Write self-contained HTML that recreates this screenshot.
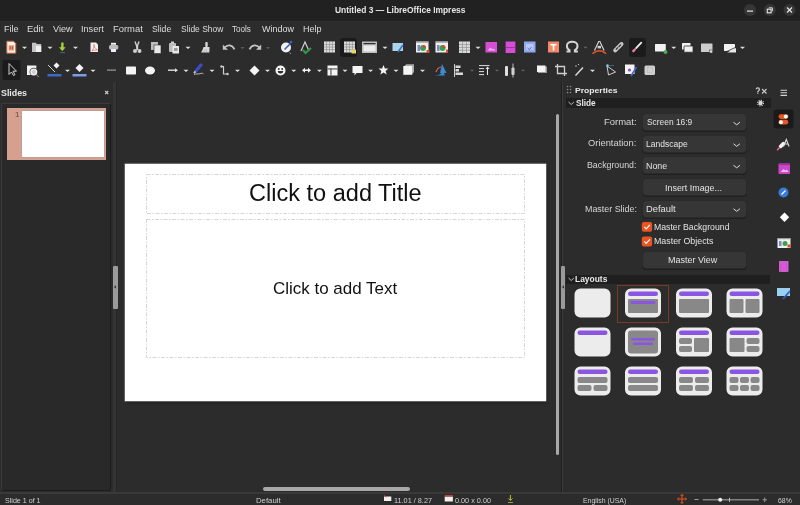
<!DOCTYPE html>
<html><head><meta charset="utf-8"><style>
*{margin:0;padding:0;box-sizing:border-box}
html,body{width:800px;height:505px;overflow:hidden;background:#2c2c2c;font-family:"Liberation Sans", sans-serif;color:#e4e4e4}
.a{position:absolute;white-space:nowrap;line-height:normal}
.dd{position:absolute;left:641.5px;width:105.5px;height:18px;border-radius:4px;background:#363636;border:1px solid #2a2a2a;box-shadow:0 1px 0 #202020}
</style></head><body>
<!-- title bar -->
<div class="a" style="left:0;top:0;width:800px;height:21px;background:#212121"></div><div class="a" style="left:0;top:21px;width:800px;height:1px;background:#303030"></div>

<!-- slides pane -->
<div class="a" style="left:1px;top:103px;width:110px;height:388px;background:#292929;border:1px solid #3a3a3a;border-right-color:#1c1c1c;border-bottom-color:#1c1c1c;border-radius:0 0 3px 3px"></div>
<div class="a" style="left:6.5px;top:107.5px;width:99.5px;height:52.5px;background:#d6a090"></div>
<div class="a" style="left:21.5px;top:111px;width:82px;height:46px;background:#ffffff;box-shadow:0 0 0 .6px #b0a098"></div>
<div class="a" style="left:14.6px;top:110px;font-size:7.5px;color:#5e4a44;transform:scaleX(1.05)">1</div>

<!-- edit area -->
<div class="a" style="left:111px;top:82px;width:451px;height:410px;background:#2c2c2c"></div>
<div class="a" style="left:112.5px;top:82px;width:3px;height:410px;background:#353535"></div>
<div class="a" style="left:115.5px;top:82px;width:1px;height:410px;background:#262626"></div>
<div class="a" style="left:113px;top:266px;width:4.5px;height:43px;background:#9a9a9a;border-radius:1px"></div>
<!-- slide -->
<div class="a" style="left:125.5px;top:164.5px;width:421px;height:238px;background:#1c1c1c;filter:blur(1.2px)"></div>
<div class="a" style="left:124.5px;top:163.5px;width:421px;height:237.5px;background:#ffffff;box-shadow:0 0 1px .4px rgba(230,230,230,.7)"></div>
<svg class="a" style="left:0;top:0" width="800" height="505"><g fill="none" stroke="#d6d6d6" stroke-width="1" stroke-dasharray="4 1.5 1.5 1.5">
<rect x="146.5" y="174.5" width="378" height="39"/><rect x="146.5" y="219.5" width="378" height="138"/></g></svg>
<!-- scrollbars -->
<div class="a" style="left:555.75px;top:113.7px;width:3.6px;height:341.2px;background:#a8a8a8;border-radius:2px"></div>
<div class="a" style="left:262.8px;top:487.2px;width:147.5px;height:3.8px;background:#a8a8a8;border-radius:2px"></div>

<!-- right panel -->
<div class="a" style="left:560.5px;top:82px;width:1px;height:410px;background:#1e1e1e"></div>
<div class="a" style="left:561.5px;top:82px;width:1px;height:410px;background:#3c3c3c"></div>
<div class="a" style="left:560.5px;top:265.5px;width:4.5px;height:43px;background:#9a9a9a;border-radius:1px"></div>
<div class="a" style="left:566px;top:97.5px;width:204.5px;height:10.5px;background:#1f1f1f"></div>
<div class="a" style="left:566px;top:274.5px;width:203.5px;height:9.5px;background:#1f1f1f"></div>
<div class="dd" style="top:113px"></div>
<div class="dd" style="top:134.5px"></div>
<div class="dd" style="top:156px"></div>
<div class="dd" style="top:178px"></div>
<div class="dd" style="top:200px"></div>
<div class="dd" style="top:250.5px"></div>

<!-- status bar -->
<div class="a" style="left:0;top:492px;width:800px;height:1.8px;background:#393939"></div>

<div class="a" style="left:334.89px;top:4.77px;font-size:8.84px;font-weight:700;color:#e6e6e6;transform:scaleX(0.953);transform-origin:0 0;">Untitled 3 — LibreOffice Impress</div>
<div class="a" style="left:4.27px;top:23.50px;font-size:8.70px;font-weight:400;color:#dedede;transform:scaleX(1.045);transform-origin:0 0;">File</div>
<div class="a" style="left:27.24px;top:23.50px;font-size:8.70px;font-weight:400;color:#dedede;transform:scaleX(1.090);transform-origin:0 0;">Edit</div>
<div class="a" style="left:52.95px;top:23.50px;font-size:8.70px;font-weight:400;color:#dedede;transform:scaleX(1.045);transform-origin:0 0;">View</div>
<div class="a" style="left:81.18px;top:23.50px;font-size:8.70px;font-weight:400;color:#dedede;transform:scaleX(1.052);transform-origin:0 0;">Insert</div>
<div class="a" style="left:112.75px;top:23.50px;font-size:8.70px;font-weight:400;color:#dedede;transform:scaleX(1.083);transform-origin:0 0;">Format</div>
<div class="a" style="left:151.61px;top:23.50px;font-size:8.70px;font-weight:400;color:#dedede;transform:scaleX(0.996);transform-origin:0 0;">Slide</div>
<div class="a" style="left:180.62px;top:23.50px;font-size:8.70px;font-weight:400;color:#dedede;transform:scaleX(0.974);transform-origin:0 0;">Slide Show</div>
<div class="a" style="left:232.34px;top:23.50px;font-size:8.70px;font-weight:400;color:#dedede;transform:scaleX(0.933);transform-origin:0 0;">Tools</div>
<div class="a" style="left:261.95px;top:23.50px;font-size:8.70px;font-weight:400;color:#dedede;transform:scaleX(1.035);transform-origin:0 0;">Window</div>
<div class="a" style="left:302.78px;top:23.50px;font-size:8.70px;font-weight:400;color:#dedede;transform:scaleX(1.040);transform-origin:0 0;">Help</div>
<div class="a" style="left:1.33px;top:87.90px;font-size:9.13px;font-weight:700;color:#e8e8e8;transform:scaleX(0.968);transform-origin:0 0;">Slides</div>
<div class="a" style="left:248.82px;top:179.63px;font-size:23.33px;font-weight:400;color:#111111;transform:scaleX(1.009);transform-origin:0 0;">Click to add Title</div>
<div class="a" style="left:272.90px;top:278.63px;font-size:16.38px;font-weight:400;color:#111111;transform:scaleX(1.037);transform-origin:0 0;">Click to add Text</div>
<div class="a" style="left:575.34px;top:85.57px;font-size:7.97px;font-weight:700;color:#e8e8e8;transform:scaleX(1.078);transform-origin:0 0;">Properties</div>
<div class="a" style="left:575.65px;top:97.87px;font-size:9.28px;font-weight:700;color:#e8e8e8;transform:scaleX(0.886);transform-origin:0 0;">Slide</div>
<div class="a" style="left:575.35px;top:273.90px;font-size:8.70px;font-weight:700;color:#e8e8e8;transform:scaleX(0.971);transform-origin:0 0;">Layouts</div>
<div class="a" style="left:604.24px;top:116.97px;font-size:8.84px;font-weight:400;color:#d6d6d6;transform:scaleX(1.072);transform-origin:0 0;">Format:</div>
<div class="a" style="left:588.48px;top:139.12px;font-size:8.19px;font-weight:400;color:#d6d6d6;transform:scaleX(1.144);transform-origin:0 0;">Orientation:</div>
<div class="a" style="left:587.40px;top:160.07px;font-size:8.84px;font-weight:400;color:#d6d6d6;transform:scaleX(0.996);transform-origin:0 0;">Background:</div>
<div class="a" style="left:584.99px;top:203.63px;font-size:8.99px;font-weight:400;color:#d6d6d6;transform:scaleX(0.990);transform-origin:0 0;">Master Slide:</div>
<div class="a" style="left:646.52px;top:117.37px;font-size:8.62px;font-weight:400;color:#e4e4e4;transform:scaleX(0.974);transform-origin:0 0;">Screen 16:9</div>
<div class="a" style="left:646.22px;top:139.17px;font-size:8.41px;font-weight:400;color:#e4e4e4;transform:scaleX(1.016);transform-origin:0 0;">Landscape</div>
<div class="a" style="left:646.29px;top:160.57px;font-size:8.41px;font-weight:400;color:#e4e4e4;transform:scaleX(1.056);transform-origin:0 0;">None</div>
<div class="a" style="left:665.20px;top:181.63px;font-size:9.42px;font-weight:400;color:#e4e4e4;transform:scaleX(0.947);transform-origin:0 0;">Insert Image...</div>
<div class="a" style="left:646.15px;top:203.20px;font-size:9.57px;font-weight:400;color:#e4e4e4;transform:scaleX(0.979);transform-origin:0 0;">Default</div>
<div class="a" style="left:653.80px;top:221.78px;font-size:8.77px;font-weight:400;color:#e4e4e4;transform:scaleX(0.993);transform-origin:0 0;">Master Background</div>
<div class="a" style="left:653.79px;top:236.00px;font-size:8.70px;font-weight:400;color:#e4e4e4;transform:scaleX(1.018);transform-origin:0 0;">Master Objects</div>
<div class="a" style="left:668.48px;top:253.80px;font-size:9.57px;font-weight:400;color:#e4e4e4;transform:scaleX(0.940);transform-origin:0 0;">Master View</div>
<div class="a" style="left:5.28px;top:495.97px;font-size:7.54px;font-weight:400;color:#d0d0d0;transform:scaleX(0.943);transform-origin:0 0;">Slide 1 of 1</div>
<div class="a" style="left:256.38px;top:495.97px;font-size:7.54px;font-weight:400;color:#d0d0d0;transform:scaleX(1.034);transform-origin:0 0;">Default</div>
<div class="a" style="left:394.35px;top:495.97px;font-size:7.54px;font-weight:400;color:#d0d0d0;transform:scaleX(0.969);transform-origin:0 0;">11.01 / 8.27</div>
<div class="a" style="left:455.31px;top:495.97px;font-size:7.54px;font-weight:400;color:#d0d0d0;transform:scaleX(0.965);transform-origin:0 0;">0.00 x 0.00</div>
<div class="a" style="left:582.85px;top:495.97px;font-size:7.54px;font-weight:400;color:#d0d0d0;transform:scaleX(0.913);transform-origin:0 0;">English (USA)</div>
<div class="a" style="left:778.36px;top:495.97px;font-size:7.54px;font-weight:400;color:#d0d0d0;transform:scaleX(0.915);transform-origin:0 0;">68%</div>

<svg class="a" style="left:0;top:0" width="800" height="505">
<!-- window buttons -->
<circle cx="750" cy="10" r="6" fill="#363636"/><circle cx="769.8" cy="10" r="6" fill="#363636"/><circle cx="789.5" cy="10" r="6" fill="#363636"/>
<rect x="747" y="10.5" width="6" height="1.2" fill="#e8e8e8"/>
<rect x="767.3" y="9.2" width="3.8" height="3.6" fill="none" stroke="#e8e8e8" stroke-width="1.1"/><path d="M768.8 7.8h3.6v3.4" fill="none" stroke="#e8e8e8" stroke-width=".9"/>
<path d="M787 7.5l5 5M792 7.5l-5 5" stroke="#e8e8e8" stroke-width="1.2"/>
<rect x="340" y="38" width="17" height="19" rx="3" fill="#1b1b1b"/>
<rect x="629" y="38" width="17" height="19" rx="3" fill="#1b1b1b"/>
<rect x="2.5" y="60" width="18" height="20" rx="2" fill="#1b1b1b"/>
<path d="M6.8 41.2h6.7l2.3 2.3v9.7h-9z" fill="#fdf0e8" stroke="#b8643c" stroke-width="1"/>
<rect x="8.6" y="45.2" width="5.4" height="5.4" fill="#e0a080"/>
<rect x="9.6" y="46.4" width="1.2" height="3" fill="#c05a30"/><rect x="11.8" y="46.4" width="1.2" height="3" fill="#c05a30"/>
<path d="M22.0 46.8h5.0l-2.5 2.25z" fill="#e0e0e0"/>
<path d="M32 42.7h3.8l1 1.3h4.4v8h-9.2z" fill="#c4c4c4"/>
<rect x="35.9" y="45.9" width="5.3" height="6.1" fill="#f0f0f0"/>
<path d="M47.5 46.8h5.0l-2.5 2.25z" fill="#e0e0e0"/>
<path d="M61.3 42.5h2.3v4.8h2l-3.3 4l-3.3-4h2z" fill="#a4cc3c"/>
<rect x="60" y="52.3" width="5" height=".8" fill="#5a6a9a"/>
<path d="M73.0 46.8h5.0l-2.5 2.25z" fill="#e0e0e0"/>
<path d="M90.5 42.5h5.5l2 2v7.5h-7.5z" fill="#f6f0f0"/>
<path d="M92 51c1.5-2.5 2.5-5 2-6.5c-.5 1.5 1 4 3.5 5.5c-1.8-.2-3.6.2-5.5 1z" fill="none" stroke="#e06060" stroke-width=".7"/>
<rect x="111" y="42.8" width="5" height="2" fill="#f0f0f0"/>
<rect x="109" y="45" width="9.3" height="4.5" rx="1.5" fill="#bcbcbc"/>
<rect x="111" y="49" width="5" height="3" fill="#eeeef6"/>
<path d="M135 41.5l2 5.5l2-5.5" fill="none" stroke="#cfcfcf" stroke-width="1.4"/>
<circle cx="135" cy="51" r="2" fill="#cfcfcf"/><circle cx="139.5" cy="51" r="2" fill="#cfcfcf"/>
<rect x="136.2" y="46" width="2" height="4" fill="#cfcfcf"/>
<rect x="151" y="42" width="7" height="8" fill="#bdbdbd"/>
<rect x="154" y="45" width="7" height="8.5" fill="#e8e8e8" stroke="#2c2c2c" stroke-width=".6"/>
<rect x="169" y="43" width="7" height="9" rx="1" fill="#bdbdbd"/>
<rect x="171" y="41.5" width="3" height="2" fill="#d0d0d0"/>
<rect x="172.5" y="46" width="6.5" height="7.5" fill="#e8e8e8"/>
<rect x="174" y="48" width="3.5" height="3" fill="#9a9a9a"/>
<path d="M185.5 46.8h5.0l-2.5 2.25z" fill="#e0e0e0"/>
<rect x="205.3" y="42" width="2.4" height="5" rx=".8" fill="#d8d8d8"/>
<path d="M203.5 47h6v1.8l-.2 3.6h-8.2l1.2-2.2z" fill="#d8d8d8"/>
<path d="M204 52.4l1-3M206.3 52.4l.6-3" stroke="#9a9a9a" stroke-width=".5"/>
<path d="M224.5 47.5c3-3.2 7.5-3.2 10 1.8" fill="none" stroke="#c4c4c4" stroke-width="1.8"/>
<path d="M222.8 44.5v5.2h5.2z" fill="#c4c4c4"/>
<path d="M240.5 47.3h4l-2 1.8z" fill="#6a6a6a"/>
<path d="M259.5 47.5c-3-3.2-7.5-3.2-10 1.8" fill="none" stroke="#c4c4c4" stroke-width="1.8"/>
<path d="M261.2 44.5v5.2h-5.2z" fill="#c4c4c4"/>
<path d="M266 47.3h4l-2 1.8z" fill="#6a6a6a"/>
<circle cx="286" cy="47.5" r="5" fill="#f2f2f2"/>
<path d="M284.5 49.5l6-6" stroke="#3a63c8" stroke-width="1.6"/>
<circle cx="291" cy="42" r="1.3" fill="#3a63c8"/>
<path d="M289.5 52.5l1.5 1.5" stroke="#9a9a9a" stroke-width="1"/>
<path d="M301 51l4-9l4 9" fill="none" stroke="#cfcfcf" stroke-width="1.2"/>
<path d="M303 50l2.5 3l5.5-5" fill="none" stroke="#2f9a48" stroke-width="2"/>
<rect x="324" y="41.5" width="11" height="11" fill="#dedede"/><rect x="326.45" y="41.5" width=".6" height="11" fill="#858585"/><rect x="329.20" y="41.5" width=".6" height="11" fill="#858585"/><rect x="331.95" y="41.5" width=".6" height="11" fill="#858585"/><rect x="324" y="43.95" width="11" height=".6" fill="#858585"/><rect x="324" y="46.70" width="11" height=".6" fill="#858585"/><rect x="324" y="49.45" width="11" height=".6" fill="#858585"/>
<rect x="344" y="41.5" width="11" height="11" fill="#dcdcdc"/><rect x="346.45" y="41.5" width=".6" height="11" fill="#858585"/><rect x="349.20" y="41.5" width=".6" height="11" fill="#858585"/><rect x="351.95" y="41.5" width=".6" height="11" fill="#858585"/><rect x="344" y="43.95" width="11" height=".6" fill="#858585"/><rect x="344" y="46.70" width="11" height=".6" fill="#858585"/><rect x="344" y="49.45" width="11" height=".6" fill="#858585"/>
<rect x="351.5" y="49.5" width="4.5" height="4" fill="#e8d86a"/>
<rect x="362" y="41.5" width="15" height="11.5" fill="#bdbdbd"/>
<rect x="363.5" y="43" width="12" height="1.2" fill="#2c2c2c"/>
<rect x="363.5" y="45.5" width="12" height="6" fill="#ececec"/>
<path d="M382.5 46.8h5.0l-2.5 2.25z" fill="#e0e0e0"/>
<path d="M392.5 43h10.5v8h-10.5z" fill="#a8d4ee"/>
<path d="M398 52l5-7" stroke="#3d6fc0" stroke-width="1.6"/>
<rect x="416" y="41.5" width="12.5" height="11" fill="#f0f0f0"/>
<rect x="416" y="41.5" width="12.5" height="1.2" fill="#9a9a9a"/>
<rect x="417.5" y="45" width="2.5" height="6" fill="#7a88c8"/>
<circle cx="423" cy="48" r="3" fill="#3aa050"/>
<path d="M423 45a3 3 0 0 1 3 3h-3z" fill="#e04030"/>
<rect x="435.5" y="41.5" width="12.5" height="11" fill="#f0f0f0"/>
<rect x="435.5" y="41.5" width="12.5" height="1.2" fill="#9a9a9a"/>
<rect x="437.0" y="45" width="2.5" height="6" fill="#7a88c8"/>
<circle cx="442.5" cy="48" r="3" fill="#3aa050"/>
<path d="M442.5 45a3 3 0 0 1 3 3h-3z" fill="#e04030"/>
<rect x="426.5" y="50" width="3" height="3" fill="#e05020"/>
<rect x="446" y="49.5" width="2" height="3.5" fill="#e05020"/>
<rect x="459" y="41.5" width="11" height="11.5" fill="#d9d9d9"/><rect x="462.37" y="41.5" width=".6" height="11.5" fill="#858585"/><rect x="466.03" y="41.5" width=".6" height="11.5" fill="#858585"/><rect x="459" y="44.08" width="11" height=".6" fill="#858585"/><rect x="459" y="46.95" width="11" height=".6" fill="#858585"/><rect x="459" y="49.83" width="11" height=".6" fill="#858585"/>
<path d="M475.5 46.8h5.0l-2.5 2.25z" fill="#e0e0e0"/>
<rect x="485.5" y="42" width="11.5" height="10.5" fill="#d44fd4"/>
<path d="M487.5 50.5l3-3l2 2l1-1l2 2z" fill="#f0b0f0"/>
<rect x="506" y="41.5" width="9" height="11.5" fill="#d44fd4"/>
<rect x="505" y="41.5" width="1" height="11.5" fill="#7a2a7a"/><rect x="515" y="41.5" width="1" height="11.5" fill="#7a2a7a"/>
<rect x="506" y="47" width="9" height=".7" fill="#8a2a8a"/>
<rect x="524" y="41.5" width="11.5" height="11" fill="#8fa8f0"/>
<rect x="526" y="44" width="7.5" height="6" fill="#b8c8f8"/>
<path d="M527.5 48l2 1.5l2-2.5" stroke="#4a6ad0" stroke-width="1" fill="none"/>
<rect x="548" y="41.5" width="11" height="11" fill="#f08a6a"/>
<path d="M550.5 44h6v1.5h-2.2v5h-1.6v-5h-2.2z" fill="#fff"/>
<path d="M566.5 51.6h3v-1.4c-1.6-.9-2.6-2.4-2.6-4.2c0-2.6 2.3-4.3 5.3-4.3s5.3 1.7 5.3 4.3c0 1.8-1 3.3-2.6 4.2v1.4h3" fill="none" stroke="#d4d4d4" stroke-width="2"/>
<path d="M583.5 46.8h4l-2 1.8z" fill="#6a6a6a"/>
<path d="M594.5 50.5l4.2-9h1.2l4.2 9" fill="none" stroke="#d0d0d0" stroke-width="1.2"/>
<rect x="597.6" y="45.8" width="3.4" height="2.6" fill="#d0d0d0"/>
<path d="M592.5 53.8c4-4 10-4 13.5 0" fill="none" stroke="#d9532a" stroke-width="1.6"/>
<path d="M615.2 50.3l6.3-6.3" stroke="#c8c8c8" stroke-width="4" stroke-linecap="round"/>
<path d="M616.2 49.3l1.6-1.6M619 46.5l1.6-1.6" stroke="#2c2c2c" stroke-width="1.2" stroke-linecap="round"/>
<path d="M641.3 42.6l-5.2 5.6" stroke="#ececec" stroke-width="1.8" stroke-linecap="round"/>
<path d="M634.8 49.5l-1.5 1.6" stroke="#e87aa0" stroke-width="2.4" stroke-linecap="round"/>
<rect x="655" y="44" width="10.8" height="7.5" rx=".5" fill="#f2f2f2"/>
<circle cx="665.5" cy="52" r="2" fill="#45b050"/>
<path d="M671.25 46.8h5.0l-2.5 2.25z" fill="#e0e0e0"/>
<rect x="682" y="43" width="8.5" height="6.5" rx=".5" fill="#f2f2f2"/>
<rect x="684" y="46" width="9" height="6.2" rx=".5" fill="#f2f2f2" stroke="#2c2c2c" stroke-width=".8"/>
<rect x="701" y="43.5" width="11.5" height="8.5" rx=".5" fill="#cdcdcd"/>
<rect x="709.5" y="50" width="3" height="3" fill="#e0e0e0" stroke="#2c2c2c" stroke-width=".5"/>
<rect x="724" y="44" width="11" height="7" rx=".5" fill="#f2f2f2"/>
<path d="M727 52.5l9-4.5v4.5z" fill="#e8e8e8"/><path d="M726 51.8l10-4.6" stroke="#2c2c2c" stroke-width=".8"/>
<path d="M740.0 46.8h5.0l-2.5 2.25z" fill="#e0e0e0"/>
<path d="M9 63.5v11l2.5-2.5l2 3.5l1.5-.8l-2-3.5h3.5z" fill="none" stroke="#cfcfcf" stroke-width="1"/>
<rect x="27" y="65.5" width="9.3" height="9.5" fill="#f4f4f4"/>
<circle cx="33.75" cy="72" r="4.2" fill="#2c2c2c"/>
<circle cx="33.75" cy="72" r="2.9" fill="#d0d0d0" stroke="#f4f4f4" stroke-width="1.3"/>
<path d="M36.5 74.8l2.2 2.2" stroke="#a0a0a0" stroke-width="1"/>
<path d="M48 65l7 7" stroke="#cfcfcf" stroke-width="1"/>
<path d="M53.5 65.5l3-3l3 3l-3 3z" fill="#f4f4f4"/>
<rect x="47.5" y="74" width="14" height="2.5" fill="#3d6ac8"/>
<path d="M65.0 69.8h5.0l-2.5 2.25z" fill="#e0e0e0"/>
<path d="M75.5 68l4-4l4 4l-4 4z" fill="#f4f4f4"/>
<rect x="72.5" y="74" width="14" height="2.5" fill="#7d9ae8"/>
<path d="M90.5 69.8h5.0l-2.5 2.25z" fill="#e0e0e0"/>
<rect x="107" y="69.5" width="9" height="1.2" fill="#9a9a9a"/>
<rect x="126" y="66.5" width="10" height="8" rx=".8" fill="#f4f4f4"/>
<ellipse cx="150" cy="70.5" rx="5" ry="4" fill="#f4f4f4"/>
<path d="M168 70.2h7" stroke="#e0e0e0" stroke-width="1.4"/><path d="M175 68.2l3 2l-3 2z" fill="#e0e0e0"/>
<path d="M183.5 69.8h5.0l-2.5 2.25z" fill="#e0e0e0"/>
<path d="M195.5 71.5l5.5-6.5" stroke="#3c4cc8" stroke-width="3.2" stroke-linecap="round"/>
<path d="M194 73.2l1.3-1.8" stroke="#e8d8a0" stroke-width="1.6"/>
<path d="M194 74.5c2-1 4-.2 6-.8s2.5-.8 3.5.3" stroke="#c8c8c8" stroke-width=".9" fill="none"/>
<path d="M209.5 69.8h5.0l-2.5 2.25z" fill="#e0e0e0"/>
<path d="M221.5 66.5h2v7.5h3.5" stroke="#cfcfcf" stroke-width="1.2" fill="none"/>
<circle cx="221.5" cy="66.5" r="1.2" fill="#cfcfcf"/><circle cx="227.5" cy="74" r="1.2" fill="#cfcfcf"/>
<path d="M235.0 69.8h5.0l-2.5 2.25z" fill="#e0e0e0"/>
<path d="M254.5 65.5l5 5l-5 5l-5-5z" fill="#f4f4f4"/>
<path d="M265.0 69.8h5.0l-2.5 2.25z" fill="#e0e0e0"/>
<circle cx="280.5" cy="70.5" r="5" fill="#f4f4f4"/>
<circle cx="278.8" cy="69" r=".9" fill="#2c2c2c"/><circle cx="282.2" cy="69" r=".9" fill="#2c2c2c"/>
<path d="M277.8 71h5.4a2.7 2.5 0 0 1 -5.4 0z" fill="#2c2c2c"/>
<path d="M291.25 69.8h5.0l-2.5 2.25z" fill="#e0e0e0"/>
<path d="M302 70.2l3-2.5v1.7h3v-1.7l3 2.5l-3 2.5v-1.7h-3v1.7z" fill="#f4f4f4"/>
<path d="M316.9 69.8h5.0l-2.5 2.25z" fill="#e0e0e0"/>
<rect x="327.5" y="65.5" width="10" height="10" fill="#f4f4f4"/>
<rect x="327.5" y="68.5" width="10" height=".9" fill="#2c2c2c"/><rect x="330.5" y="68.5" width=".9" height="7" fill="#2c2c2c"/>
<path d="M342.5 69.8h5.0l-2.5 2.25z" fill="#e0e0e0"/>
<path d="M352.5 66h10v7h-6l-2 2.5v-2.5h-2z" fill="#f4f4f4"/>
<path d="M368.1 69.8h5.0l-2.5 2.25z" fill="#e0e0e0"/>
<path d="M383.5 65l1.4 3.6h3.6l-2.9 2.3l1.1 3.7l-3.2-2.2l-3.2 2.2l1.1-3.7l-2.9-2.3h3.6z" fill="#f4f4f4"/>
<path d="M393.5 69.8h5.0l-2.5 2.25z" fill="#e0e0e0"/>
<path d="M404.5 66l1.8-1.8h7.7v7.9l-1.8 2.2z" fill="#a8a8a8"/>
<rect x="403.3" y="66" width="8.9" height="8.8" fill="#f4f4f4"/>
<path d="M420.0 69.8h5.0l-2.5 2.25z" fill="#e0e0e0"/>
<path d="M442 64l4.5 9h-6.5z" fill="#3a8ad8"/>
<path d="M434 75.5c3 0 7-1 9-4l2 4z" fill="#3a8ad8"/>
<path d="M436 72c1-3 3-4.5 5-5" stroke="#e06040" stroke-width="1.2" fill="none"/>
<rect x="454" y="64" width="1" height="13" fill="#cfcfcf"/>
<rect x="455.5" y="65.5" width="5" height="2.5" fill="#d8d8d8"/><rect x="455.5" y="69" width="3.5" height="2.5" fill="#d8d8d8"/><rect x="455.5" y="72.5" width="7.5" height="2.5" fill="#d8d8d8"/>
<path d="M470 69.8h4l-2 1.8z" fill="#6a6a6a"/>
<rect x="479" y="65" width="10.5" height="1.1" fill="#cfcfcf"/><rect x="479" y="68" width="5" height="1.1" fill="#cfcfcf"/><rect x="479" y="71" width="5" height="1.1" fill="#cfcfcf"/><rect x="479" y="74" width="5" height="1.1" fill="#cfcfcf"/>
<path d="M487.5 75v-7" stroke="#e8e8e8" stroke-width="1"/><path d="M485.5 69l2-2.5l2 2.5z" fill="#e8e8e8"/>
<path d="M495 69.8h4l-2 1.8z" fill="#6a6a6a"/>
<rect x="505" y="66" width="3" height="10" rx="1" fill="#e0e0e0"/><rect x="511.5" y="67.5" width="3" height="7.5" rx="1" fill="#e0e0e0"/><rect x="512.5" y="63.5" width="1" height="14" fill="#bdbdbd"/>
<path d="M521 69.8h4l-2 1.8z" fill="#6a6a6a"/>
<rect x="538" y="66.5" width="9" height="6.5" fill="#9a9a9a"/><rect x="537" y="65.5" width="8.5" height="6.5" fill="#f4f4f4"/>
<path d="M557.5 64v9.5h9.5M555 66.5h9.5v9.5" stroke="#cfcfcf" stroke-width="1.3" fill="none"/>
<path d="M575.5 75.5l7.5-8" stroke="#d8d8d8" stroke-width="1.6"/><circle cx="576" cy="66" r=".7" fill="#d8d8d8"/><circle cx="578.5" cy="64.5" r=".6" fill="#d8d8d8"/>
<path d="M590.0 69.8h5.0l-2.5 2.25z" fill="#e0e0e0"/>
<path d="M607 66l8.5 6l-7 3z" fill="none" stroke="#cfcfcf" stroke-width="1"/>
<circle cx="607.5" cy="65.5" r="1.3" fill="#7ad0e0"/><path d="M608 65.5h6" stroke="#4a8aa0" stroke-width=".6"/>
<rect x="625" y="64.5" width="9.5" height="9.5" fill="#f4f4f4"/>
<circle cx="629.5" cy="70" r="1.6" fill="#9a4ab0"/>
<path d="M631 76l5.5-9" stroke="#3a6ad0" stroke-width="1.6"/>
<rect x="644.5" y="65.5" width="10.5" height="9.5" rx="1.5" fill="#cfcfcf"/><rect x="647.5" y="67.5" width="5" height="5" fill="none" stroke="#bbbbbb" stroke-width=".6"/>
<!-- slides pane close -->
<path d="M105.2 91l3 3M108.2 91l-3 3" stroke="#c8c8c8" stroke-width="1.2"/>
<g fill="#8a8a8a">
<circle cx="567.5" cy="86.5" r=".8"/><circle cx="570.5" cy="86.5" r=".8"/>
<circle cx="567.5" cy="89.5" r=".8"/><circle cx="570.5" cy="89.5" r=".8"/>
<circle cx="567.5" cy="92.5" r=".8"/><circle cx="570.5" cy="92.5" r=".8"/>
</g>
<!-- sidebar controls -->
<path d="M756.2 89.3c0-1.8 3.2-1.8 3.2 0c0 1.4-1.6 1.4-1.6 2.8M757.8 92.6v1.2" stroke="#c8c8c8" stroke-width="1.3" fill="none"/>
<path d="M762 89l4.5 4.5M766.5 89l-4.5 4.5" stroke="#d0d0d0" stroke-width="1.1"/>
<path d="M780.5 90.2h6.5M780.5 92.8h6.5M780.5 95.4h6.5" stroke="#d4d4d4" stroke-width="1.1"/>
<circle cx="760.5" cy="103" r="2.2" fill="#d8d8d8"/><circle cx="760.5" cy="103" r="2.9" fill="none" stroke="#d8d8d8" stroke-width="1.2" stroke-dasharray="1 1.28"/>
<path d="M568.5 102l2.7 2.5l2.7-2.5M568.5 278l2.7 2.5l2.7-2.5" stroke="#d0d0d0" stroke-width=".9" fill="none"/>
<path d="M562 287l2-1.8v3.6z" fill="#333"/><path d="M114 287l2-1.8v3.6z" fill="#333"/>
<!-- dropdown chevrons -->
<path d="M733.5 122.3l3.2 2.5l3.2-2.5M733.5 143.8l3.2 2.5l3.2-2.5M733.5 165.3l3.2 2.5l3.2-2.5M733.5 208.8l3.2 2.5l3.2-2.5" stroke="#e0e0e0" stroke-width="1" fill="none"/>
<!-- checkboxes -->
<rect x="641.8" y="222" width="10.3" height="9.8" rx="2" fill="#e95420"/>
<rect x="641.8" y="236.6" width="10.3" height="9.8" rx="2" fill="#e95420"/>
<path d="M644.3 226.8l1.9 2l3.7-4M644.3 241.4l1.9 2l3.7-4" stroke="#fff" stroke-width="1.2" fill="none"/>
<!-- selected layout border -->
<rect x="617.5" y="285.5" width="51" height="37" fill="none" stroke="#7a3a22" stroke-width="1"/>
<rect x="576" y="290" width="33" height="26" rx="4.5" fill="#ececec" stroke="#ececec" stroke-width="3"/>
<rect x="626.5" y="290" width="33" height="26" rx="4.5" fill="#ececec" stroke="#ececec" stroke-width="3"/><rect x="628.0" y="291.5" width="30" height="4.5" rx="2.25" fill="#8a55e0"/><rect x="628.0" y="299" width="30" height="14" rx="1" fill="#888888"/><rect x="630.5" y="301" width="25" height="3" rx="1.5" fill="#8a55e0"/>
<rect x="677.5" y="290" width="33" height="26" rx="4.5" fill="#ececec" stroke="#ececec" stroke-width="3"/><rect x="679.0" y="291.5" width="30" height="4.5" rx="2.25" fill="#8a55e0"/><rect x="679.0" y="299" width="30" height="14" rx="1" fill="#888888"/>
<rect x="728" y="290" width="33" height="26" rx="4.5" fill="#ececec" stroke="#ececec" stroke-width="3"/><rect x="729.5" y="291.5" width="30" height="4.5" rx="2.25" fill="#8a55e0"/><rect x="729.5" y="299" width="14" height="14" rx="1" fill="#888888"/><rect x="745.5" y="299" width="14" height="14" rx="1" fill="#888888"/>
<rect x="576" y="329" width="33" height="26" rx="4.5" fill="#ececec" stroke="#ececec" stroke-width="3"/><rect x="577.5" y="330.5" width="30" height="4.5" rx="2.25" fill="#8a55e0"/>
<rect x="626.5" y="329" width="33" height="26" rx="4.5" fill="#888888" stroke="#ececec" stroke-width="3"/><rect x="631.0" y="338" width="24" height="2.5" rx="1.25" fill="#8a55e0"/><rect x="633.0" y="342.5" width="20" height="2.5" rx="1.25" fill="#8a55e0"/>
<rect x="677.5" y="329" width="33" height="26" rx="4.5" fill="#ececec" stroke="#ececec" stroke-width="3"/><rect x="679.0" y="330.5" width="30" height="4.5" rx="2.25" fill="#8a55e0"/><rect x="679.0" y="338" width="13" height="6" rx="2" fill="#888888"/><rect x="679.0" y="346" width="13" height="6" rx="2" fill="#888888"/><rect x="694.0" y="338" width="15" height="14" rx="1" fill="#888888"/>
<rect x="728" y="329" width="33" height="26" rx="4.5" fill="#ececec" stroke="#ececec" stroke-width="3"/><rect x="729.5" y="330.5" width="30" height="4.5" rx="2.25" fill="#8a55e0"/><rect x="729.5" y="338" width="15" height="14" rx="1" fill="#888888"/><rect x="746.5" y="338" width="13" height="6" rx="2" fill="#888888"/><rect x="746.5" y="346" width="13" height="6" rx="2" fill="#888888"/>
<rect x="576" y="368" width="33" height="26" rx="4.5" fill="#ececec" stroke="#ececec" stroke-width="3"/><rect x="577.5" y="369.5" width="30" height="4.5" rx="2.25" fill="#8a55e0"/><rect x="577.5" y="377" width="30" height="6" rx="2" fill="#888888"/><rect x="577.5" y="385" width="14" height="6" rx="2" fill="#888888"/><rect x="593.5" y="385" width="14" height="6" rx="2" fill="#888888"/>
<rect x="626.5" y="368" width="33" height="26" rx="4.5" fill="#ececec" stroke="#ececec" stroke-width="3"/><rect x="628.0" y="369.5" width="30" height="4.5" rx="2.25" fill="#8a55e0"/><rect x="628.0" y="377" width="30" height="6" rx="2" fill="#888888"/><rect x="628.0" y="385" width="30" height="6" rx="2" fill="#888888"/>
<rect x="677.5" y="368" width="33" height="26" rx="4.5" fill="#ececec" stroke="#ececec" stroke-width="3"/><rect x="679.0" y="369.5" width="30" height="4.5" rx="2.25" fill="#8a55e0"/><rect x="679.0" y="377" width="14" height="6" rx="2" fill="#888888"/><rect x="695.0" y="377" width="14" height="6" rx="2" fill="#888888"/><rect x="679.0" y="385" width="14" height="6" rx="2" fill="#888888"/><rect x="695.0" y="385" width="14" height="6" rx="2" fill="#888888"/>
<rect x="728" y="368" width="33" height="26" rx="4.5" fill="#ececec" stroke="#ececec" stroke-width="3"/><rect x="729.5" y="377" width="9" height="6" rx="2" fill="#888888"/><rect x="729.5" y="385" width="9" height="6" rx="2" fill="#888888"/><rect x="740.0" y="377" width="9" height="6" rx="2" fill="#888888"/><rect x="740.0" y="385" width="9" height="6" rx="2" fill="#888888"/><rect x="750.5" y="377" width="9" height="6" rx="2" fill="#888888"/><rect x="750.5" y="385" width="9" height="6" rx="2" fill="#888888"/><rect x="729.5" y="369.5" width="30" height="4.5" rx="2.25" fill="#8a55e0"/>
<!-- sidebar tabs -->
<rect x="773.5" y="109.5" width="20" height="19" rx="3" fill="#1a1a1a"/>
<rect x="778.5" y="114.2" width="9.8" height="4.8" rx="2.4" fill="#e95420"/><circle cx="785.8" cy="116.6" r="2" fill="#fff"/>
<rect x="778.5" y="119.8" width="9.8" height="4.8" rx="2.4" fill="#e95420"/><circle cx="781" cy="122.2" r="2" fill="#fff"/>
<path d="M780.6 146.4l2.8-2.8" stroke="#f4f4f4" stroke-width="3.6" stroke-linecap="round"/><path d="M777.6 149.6l1.6-1.6" stroke="#e06090" stroke-width="1.7" stroke-linecap="round"/>
<path d="M783.5 146.5l2.8-7l2.8 7" stroke="#e0e0e0" stroke-width="1.1" fill="none"/><path d="M784.8 144h3" stroke="#e0e0e0" stroke-width="1"/>
<rect x="778.5" y="163.5" width="11.5" height="10.5" rx="1" fill="#c848c8"/><path d="M780.5 172l3-3l2 1.6l1.2-1l2 2.4z" fill="#f0b8f0"/><rect x="778.5" y="163.5" width="11.5" height="1.6" fill="#a030a0"/>
<circle cx="783.5" cy="192.5" r="5" fill="#3a7ad8"/><path d="M781.5 194.5l4-4" stroke="#fff" stroke-width="1.2"/>
<path d="M784.5 212.5l4.7 4.7l-4.7 4.7l-4.7-4.7z" fill="#fff"/>
<rect x="777.5" y="238" width="13" height="10" fill="#f0f0f0"/><rect x="777.5" y="238" width="13" height="1.2" fill="#9a9a9a"/>
<rect x="779" y="241" width="2.5" height="5" fill="#7a88c8"/><circle cx="785" cy="243.5" r="2.5" fill="#3aa050"/><rect x="787.5" y="244.5" width="3" height="3" fill="#e05020"/>
<rect x="779" y="261" width="9.5" height="11" fill="#c04ac0"/><rect x="781" y="261" width="5.5" height="11" fill="#d45ad4"/>
<path d="M779.9 261.5v10M787.6 261.5v10" stroke="#f0a0f0" stroke-width=".8" stroke-dasharray="1 1"/>
<rect x="777" y="288" width="13" height="8" fill="#9ad0f0"/><path d="M783 299l7-8" stroke="#3060c0" stroke-width="1.8"/>
<!-- status icons -->
<rect x="384" y="496.5" width="7.3" height="4.5" fill="#f0f0f0"/><path d="M384 495.5l2.5 1.5" stroke="#e04040" stroke-width="1"/>
<rect x="444.7" y="496.5" width="8.2" height="5" fill="#f0f0f0"/><rect x="444.7" y="495" width="8.2" height="1.5" fill="#c04040"/>
<path d="M510.4 495v5M508.4 498.5l2 2l2-2" stroke="#b8c040" stroke-width="1" fill="none"/><rect x="508" y="502" width="5" height=".8" fill="#b8c040"/>
<path d="M682 494.5v9M677.5 499h9" stroke="#e05020" stroke-width="1.2"/>
<path d="M680.5 496l1.5-1.5l1.5 1.5M680.5 502l1.5 1.5l1.5-1.5M679 497.5l-1.5 1.5l1.5 1.5M685 497.5l1.5 1.5l-1.5 1.5" stroke="#e05020" stroke-width="1" fill="none"/>
<rect x="694.4" y="499" width="4.2" height="1" fill="#9a9a9a"/>
<rect x="702.8" y="499.2" width="56.2" height="1.2" fill="#9a9a9a"/>
<circle cx="720.2" cy="499.8" r="2" fill="#f0f0f0"/>
<rect x="729" y="497.8" width="1" height="4" fill="#bdbdbd"/>
<path d="M762.6 499.8h4.3M764.75 497.6v4.4" stroke="#9a9a9a" stroke-width="1"/>
</svg>
</body></html>
